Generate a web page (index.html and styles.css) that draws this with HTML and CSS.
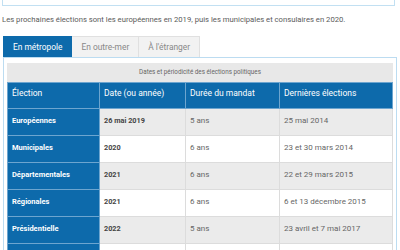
FILE: index.html
```html
<!DOCTYPE html>
<html lang="fr">
<head>
<meta charset="utf-8">
<link rel="stylesheet" href="styles.css">
</head>
<body>
<div class="topbox"></div>
<p class="intro">Les prochaines élections sont les européennes en 2019, puis les municipales et consulaires en 2020.</p>
<div class="tabs">
  <div class="tab active">En métropole</div>
  <div class="tab">En outre-mer</div>
  <div class="tab">À l'étranger</div>
</div>
<div class="panel">
  <table class="elections">
    <caption>Dates et périodicité des élections politiques</caption>
    <thead>
      <tr><th class="c1">Élection</th><th class="c2">Date (ou année)</th><th class="c3">Durée du mandat</th><th class="c4">Dernières élections</th></tr>
    </thead>
    <tbody>
      <tr class="odd"><th>Européennes</th><td class="date">26 mai 2019</td><td>5 ans</td><td>25 mai 2014</td></tr>
      <tr><th>Municipales</th><td class="date">2020</td><td>6 ans</td><td>23 et 30 mars 2014</td></tr>
      <tr class="odd"><th>Départementales</th><td class="date">2021</td><td>6 ans</td><td>22 et 29 mars 2015</td></tr>
      <tr><th>Régionales</th><td class="date">2021</td><td>6 ans</td><td>6 et 13 décembre 2015</td></tr>
      <tr class="odd"><th>Présidentielle</th><td class="date">2022</td><td>5 ans</td><td>23 avril et 7 mai 2017</td></tr>
      <tr><th>Législatives</th><td class="date">2022</td><td>5 ans</td><td>11 et 18 juin 2017</td></tr>
    </tbody>
  </table>
</div>
</body>
</html>
```
FILE: styles.css
```css
html, body {
  margin: 0;
  padding: 0;
  background: #fff;
  overflow: hidden;
}
body {
  font-family: Roboto, "Liberation Sans", sans-serif;
  color: #555;
}
.topbox {
  height: 5px;
  margin: 0 5px 0 2px;
  border: 1px solid #c2e0f2;
  border-top: none;
}
.intro {
  margin: 8px 0 0 2px;
  font-size: 7.7px;
  line-height: 12px;
  color: #5a5a5a;
}
.tabs {
  display: flex;
  margin: 10px 0 0 3px;
}
.tab {
  height: 21px;
  line-height: 21px;
  padding: 0 9px;
  font-size: 8.4px;
  color: #888;
  background: #f2f2f2;
  border: 1px solid #e0e0e0;
  border-bottom: none;
  box-sizing: border-box;
}
.tab + .tab {
  border-left: none;
}
.tab.active {
  background: #0d6aab;
  color: #fff;
  border-color: #0d6aab;
}
.panel {
  margin: 0 3px 0 3px;
  border: 1px solid #bcdcf1;
  border-bottom: none;
  padding: 5px 3px 0 3px;
}
.elections {
  width: 100%;
  border-collapse: collapse;
  font-size: 8px;
  table-layout: fixed;
}
.elections caption {
  background: #e8e8e8;
  font-size: 6.3px;
  color: #666;
  height: 19px;
  line-height: 19px;
  text-align: center;
}
.elections th, .elections td {
  text-align: left;
  padding: 6px 4px 0 4px;
  height: 20px;
  line-height: 12px;
  vertical-align: top;
  font-weight: normal;
}
.elections th {
  background: #0d6aab;
  color: #fff;
  border: 1px solid #6da5cf;
}
.elections thead th {
  height: 21px;
  padding-top: 4px;
  font-size: 8.5px;
}
.elections td {
  border: 1px solid #dcdcdc;
  color: #666;
}
.elections tbody th {
  font-weight: bold;
  font-size: 7.5px;
}
.elections td.date {
  font-weight: bold;
  font-size: 7.3px;
  color: #444;
}
.elections tr.odd td {
  background: #ebebeb;
}
.c1 { width: 83px; }
.c2 { width: 77px; }
.c3 { width: 85px; }
```
